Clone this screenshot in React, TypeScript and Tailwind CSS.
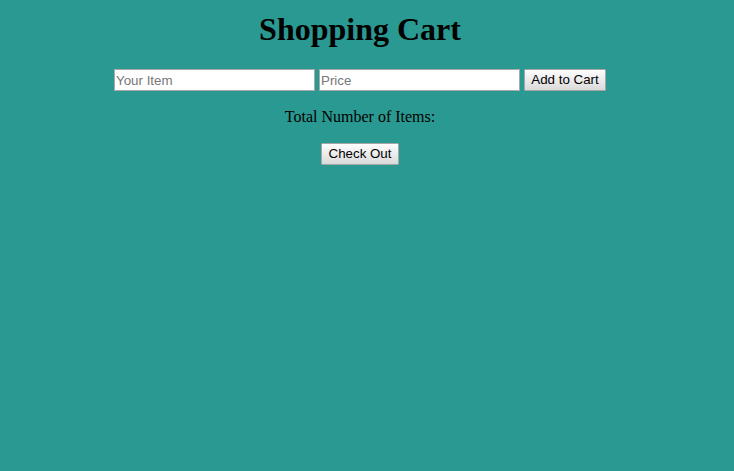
const inputClass =
  "w-[201px] h-[22px] bg-white border border-[#a9a9a9] px-[1px] text-[13.33px] text-black placeholder:text-[#777] outline-none font-['Liberation_Sans',Arial,sans-serif]"

const buttonClass =
  "h-[22px] border border-[#a6a6a6] rounded-[1px] bg-gradient-to-b from-[#fdfdfd] to-[#dadada] text-[13.33px] text-black leading-none font-['Liberation_Sans',Arial,sans-serif]"

export default function App() {
    return (
        <div className="min-h-[471px] w-full bg-[#2a9991] font-['Liberation_Serif',serif]">
            <div className="w-[720px] text-center pt-[12px]">
                <h1 className="text-[32px] font-bold leading-[35px] mb-[22px]">Shopping Cart</h1>
                <div className="flex justify-center gap-[4px]">
                    <input className={inputClass} placeholder="Your Item" />
                    <input className={inputClass} placeholder="Price" />
                    <button className={buttonClass + " w-[82px]"}>Add to Cart</button>
                </div>
                <p className="text-[16px] leading-[18px] mt-[17px] mb-[17px] text-black">Total Number of Items:</p>
                <div className="flex justify-center">
                    <button className={buttonClass + " w-[78px]"}>Check Out</button>
                </div>
            </div>
        </div>
    )
}
